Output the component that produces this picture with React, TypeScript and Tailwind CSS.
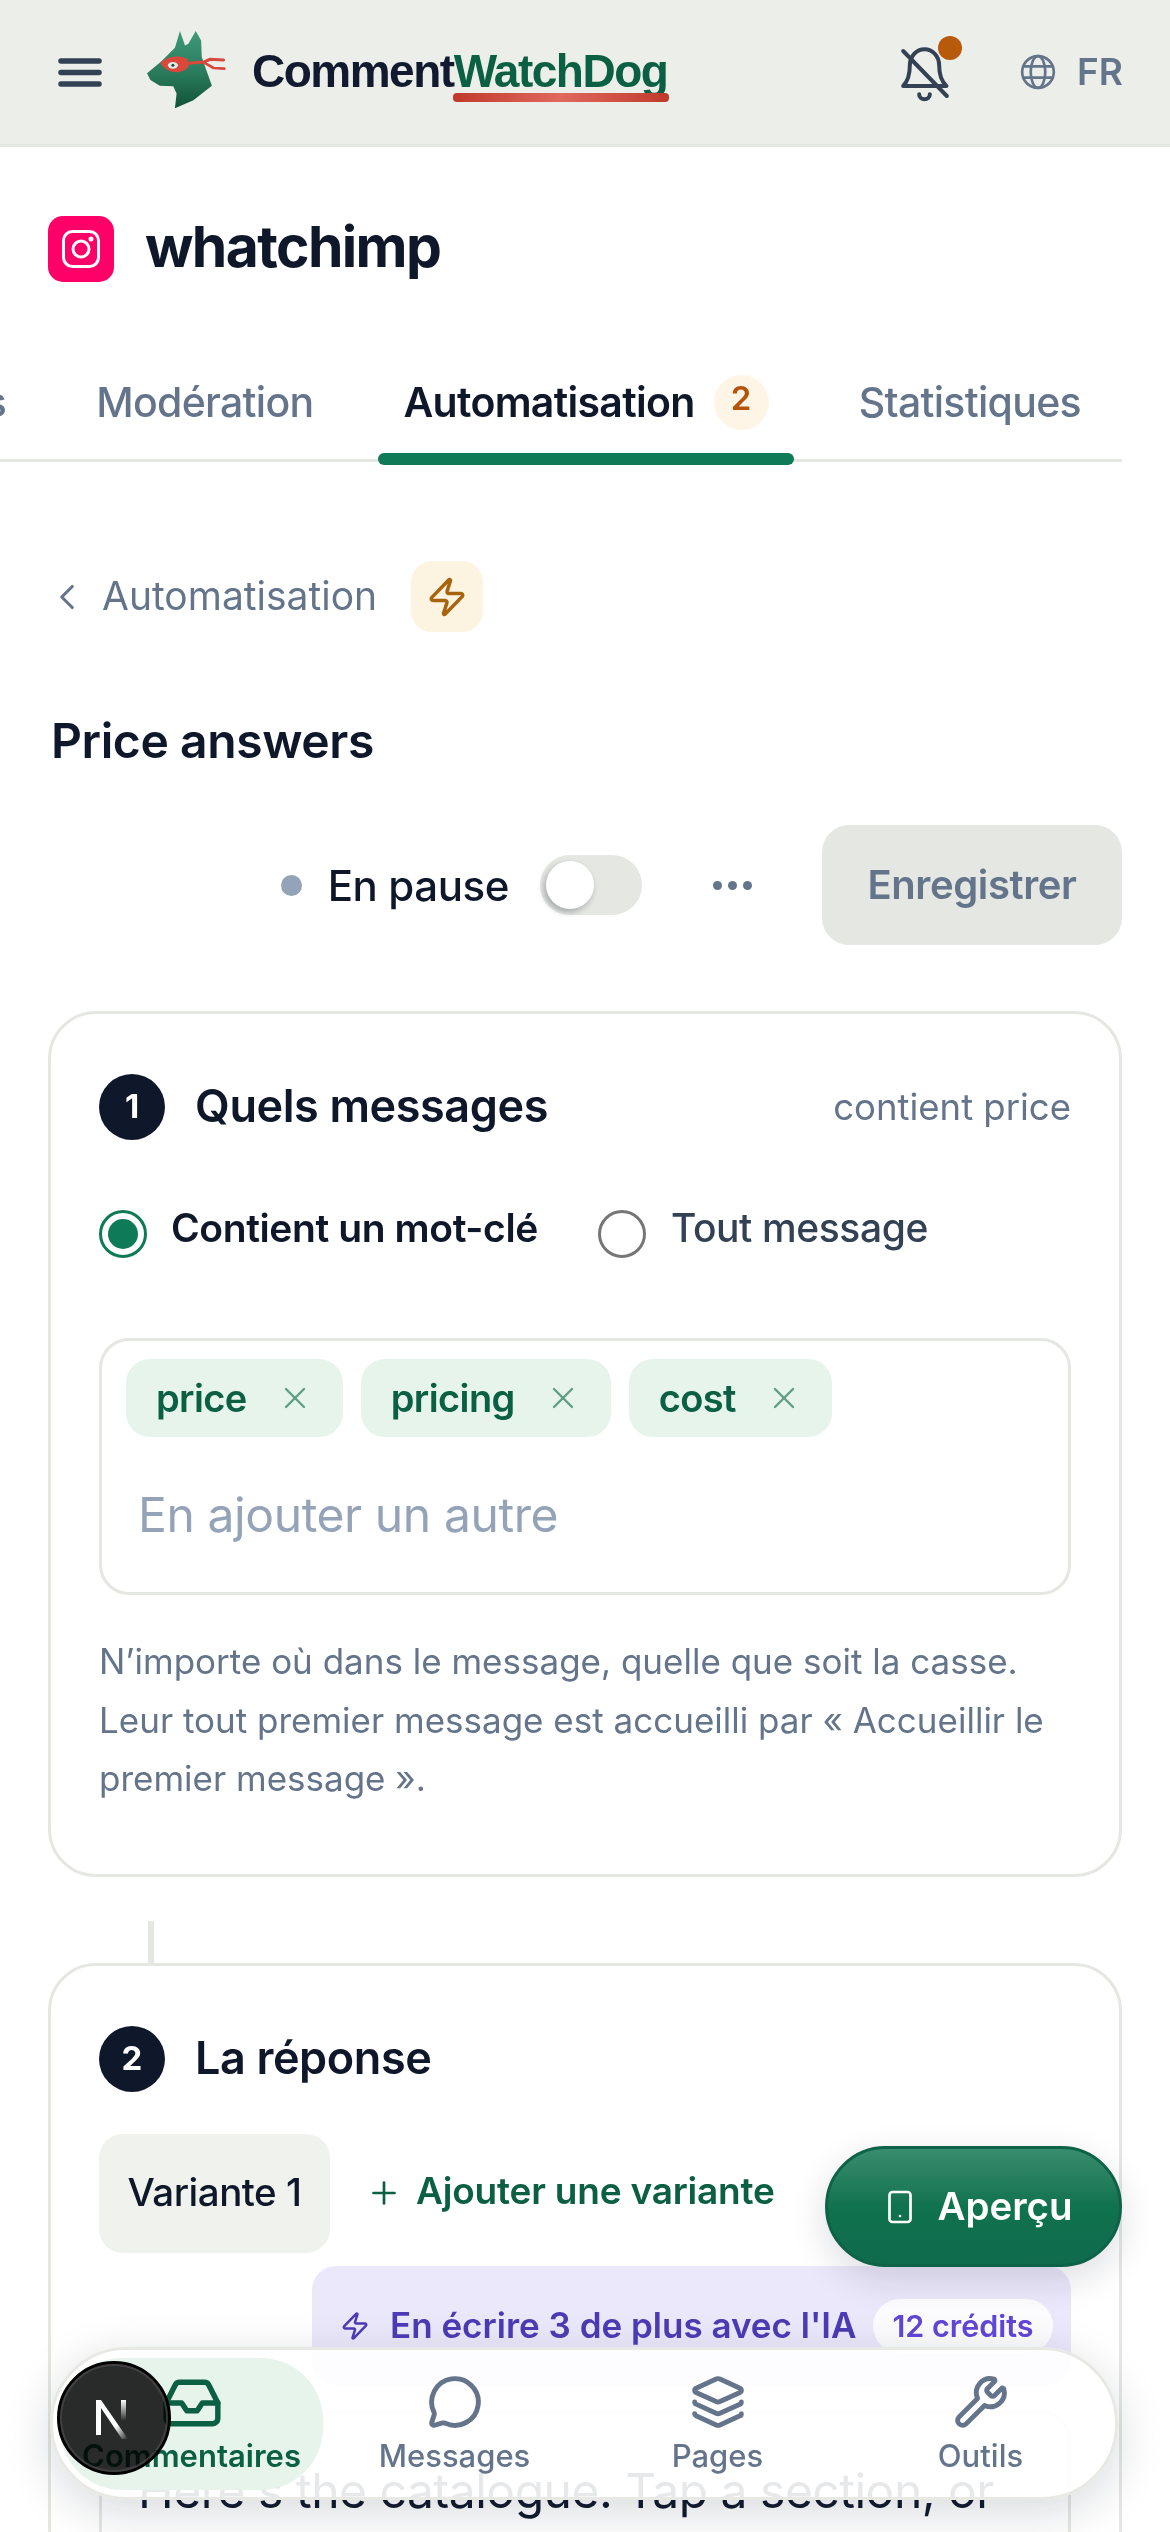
import { ChevronLeft, Inbox, Layers, MessageCircle, Plus, Smartphone, Wrench, X, Zap } from "lucide-react";

const TABS = [
  { name: "Commentaires", active: false },
  { name: "Modération", active: false },
  { name: "Automatisation", active: true },
  { name: "Statistiques", active: false },
];

const KEYWORDS = ["price", "pricing", "cost"];

const NAV = [
  { name: "Messages", icon: MessageCircle },
  { name: "Pages", icon: Layers },
  { name: "Outils", icon: Wrench },
];

function DogLogo() {
  return (
    <svg viewBox="40 30 250 250" className="w-[84px] h-[84px] shrink-0">
      <defs>
        <linearGradient id="dog" x1="0" y1="0" x2="0" y2="1">
          <stop offset="0" stopColor="#3f9a7a" />
          <stop offset="0.55" stopColor="#2a7a5c" />
          <stop offset="1" stopColor="#0f5238" />
        </linearGradient>
      </defs>
      <path
        d="M52 168 L95 132 L135 92 L150 42 L165 85 L175 80 L197 42 L213 70 L215 120 L245 205 L190 248 L135 272 L140 228 L130 206 L90 205 L62 188 Z"
        fill="url(#dog)"
      />
      <path d="M92 138 C105 118 155 110 172 126 L176 146 C160 172 112 172 92 138 Z" fill="#d9483b" />
      <path d="M170 138 L222 134 L240 126 L280 128" fill="none" stroke="#d9483b" strokeWidth="9" strokeLinecap="round" strokeLinejoin="round" />
      <path d="M222 136 L250 152 L282 154" fill="none" stroke="#d9483b" strokeWidth="8" strokeLinecap="round" strokeLinejoin="round" />
      <ellipse cx="129" cy="144" rx="15" ry="10" fill="#dfeee8" />
      <circle cx="129" cy="144" r="4.5" fill="#1f4a3b" />
    </svg>
  );
}

function BellSlash() {
  return (
    <svg viewBox="60 80 155 165" className="w-[52px] h-[55px]" fill="none" stroke="#334155" strokeWidth="12" strokeLinecap="round" strokeLinejoin="round">
      <path d="M72 197 c14-14 20-40 20-62 c0-28 20-48 44-48 s44 20 44 48 c0 22 6 48 22 62 Z" />
      <path d="M72 92 L203 227" />
      <path d="M120 222 c0 20 32 20 32 0" />
    </svg>
  );
}

function Globe() {
  return (
    <svg viewBox="0 0 24 24" className="w-[38px] h-[38px]" fill="none" stroke="#64748b" strokeWidth="1.7">
      <circle cx="12" cy="12" r="10" />
      <ellipse cx="12" cy="12" rx="4.6" ry="10" />
      <path d="M3 8.5h18M3 15.5h18" />
    </svg>
  );
}

function InstagramTile() {
  return (
    <div className="w-[66px] h-[66px] rounded-[15px] bg-[#ff0069] flex items-center justify-center shrink-0">
      <svg viewBox="0 0 38 38" className="w-[38px] h-[38px]" fill="none" stroke="#fff" strokeWidth="3">
        <rect x="1.5" y="1.5" width="35" height="35" rx="9" />
        <circle cx="19" cy="19" r="8" />
        <circle cx="29" cy="9" r="1" fill="#fff" />
      </svg>
    </div>
  );
}

function StepHeader({ n, title, hint }: { n: number; title: string; hint?: string }) {
  return (
    <div className="flex items-center h-[66px]">
      <span className="w-[66px] h-[66px] rounded-full bg-[#0f172a] text-white text-[33px] font-bold flex items-center justify-center shrink-0">
        {n}
      </span>
      <h2 className="ml-[30px] text-[45px] leading-[60px] font-semibold tracking-[-0.4px] -mt-[2px] text-[#0f172a]">{title}</h2>
      {hint && <span className="ml-auto text-[36.5px] text-[#64748b]">{hint}</span>}
    </div>
  );
}

function NextBadge() {
  return (
    <div className="absolute left-[57px] top-[2361px] w-[114px] h-[114px]">
      <div className="absolute inset-0 rounded-full bg-[#2d2d2d] border-[3px] border-black mix-blend-multiply" />
      <div className="absolute inset-[3px] rounded-full border-[2px] border-[#4a4a4a]/70" />
      <svg viewBox="0 0 40 40" className="absolute left-[37px] top-[38px] w-[40px] h-[40px]" fill="none">
        <defs>
          <linearGradient id="nx" x1="0.2" y1="0.2" x2="1" y2="1">
            <stop offset="0.55" stopColor="#fff" />
            <stop offset="1" stopColor="#fff" stopOpacity="0" />
          </linearGradient>
          <linearGradient id="ny" x1="0" y1="0" x2="0" y2="1">
            <stop offset="0" stopColor="#fff" />
            <stop offset="0.8" stopColor="#fff" stopOpacity="0" />
          </linearGradient>
        </defs>
        <path d="M2 1h5l27 39h-6L7 9v27H2z" fill="url(#nx)" />
        <rect x="27" y="1" width="5" height="26" fill="url(#ny)" />
      </svg>
    </div>
  );
}

export default function App() {
  return (
    <div className="relative w-[1170px] h-[2532px] overflow-hidden bg-white font-[Inter,sans-serif] text-[#0f172a]">
      {/* top bar */}
      <header className="h-[147px] bg-[#eceee9] border-b-[3px] border-[#e5e7e3] flex items-center pl-[58px] pr-[47px]">
        <svg viewBox="0 0 44 29" className="w-[44px] h-[29px] shrink-0" stroke="#334155" strokeWidth="5.5" strokeLinecap="round">
          <path d="M3 3h38M3 14.5h38M3 26h38" />
        </svg>
        <div className="ml-[41px] -mt-[6px]">
          <DogLogo />
        </div>
        <div className="relative ml-[25px] -mt-[3px] font-['Liberation_Sans',sans-serif] font-bold text-[46px] leading-[56px] tracking-[-1.5px] whitespace-nowrap">
          <span className="text-[#111a2e]">Comment</span>
          <span className="text-[#0b5f43]">WatchDog</span>
          <span className="absolute right-[-2px] top-[50px] w-[216px] h-[9px] rounded-[4px] bg-linear-to-r from-[#c0392b] via-[#e0685c] to-[#c0392b]" />
        </div>
        <div className="relative ml-auto mt-[4px]">
          <BellSlash />
          <span className="absolute left-[39px] -top-[11px] w-[24px] h-[24px] rounded-full bg-[#b85a0c]" />
        </div>
        <div className="ml-[68px] flex items-center gap-[20px]">
          <Globe />
          <span className="text-[37px] font-semibold text-[#64748b]">FR</span>
        </div>
      </header>

      {/* account */}
      <div className="mt-[69px] pl-[48px] flex items-center h-[66px] gap-[31px]">
        <InstagramTile />
        <h1 className="text-[57px] leading-[66px] font-bold tracking-[-1.6px] -mt-[4px]">whatchimp</h1>
      </div>

      {/* section tabs, scrolled sideways so the first one is cut off */}
      <div className="mt-[62px] w-[1122px] h-[118px] border-b-[3px] border-[#e5e7e3] flex justify-end gap-[40px] pr-[16px]">
        {TABS.map((tab) => (
          <div key={tab.name} className="relative shrink-0 flex items-center gap-[19px] px-[25px] pt-[3px]">
            <span className={`text-[41px] tracking-[-0.7px] whitespace-nowrap ${tab.active ? "font-semibold text-[#0f172a]" : "font-medium text-[#64748b]"}`}>
              {tab.name}
            </span>
            {tab.active && (
              <>
                <span className="w-[55px] h-[55px] rounded-full bg-[#fef5e6] text-[#b45309] text-[33px] font-semibold flex items-center justify-center -mt-[2px] pb-[6px]">
                  2
                </span>
                <span className="absolute left-0 right-0 bottom-[-6px] h-[12px] rounded-[6px] bg-[#0f7a57]" />
              </>
            )}
          </div>
        ))}
      </div>

      <main className="px-[48px]">
        {/* breadcrumb */}
        <div className="mt-[99px] flex items-center h-[71px]">
          <ChevronLeft size={42} strokeWidth={1.8} className="text-[#64748b] -ml-[2px]" />
          <span className="ml-[14px] text-[39px] text-[#64748b]">Automatisation</span>
          <span className="ml-[34px] w-[72px] h-[71px] rounded-[21px] bg-[#fdf3e1] flex items-center justify-center">
            <Zap size={42} strokeWidth={2} className="text-[#a8640c]" />
          </span>
        </div>

        <h2 className="mt-[80px] ml-[3px] text-[48px] leading-[58px] font-semibold tracking-[-0.4px]">Price answers</h2>

        {/* status row */}
        <div className="mt-[55px] h-[120px] flex items-center justify-end">
          <span className="w-[21px] h-[21px] rounded-full bg-[#94a3b8]" />
          <span className="ml-[26px] text-[42px] font-medium tracking-[-0.4px]">En pause</span>
          <span className="ml-[31px] w-[102px] h-[60px] rounded-full bg-[#e5e7e2] flex items-center pl-[6px]">
            <span className="w-[48px] h-[48px] rounded-full bg-white shadow-[-2px_3px_6px_rgba(15,23,42,0.3)]" />
          </span>
          <span className="ml-[71px] flex gap-[6px]">
            <span className="w-[9px] h-[9px] rounded-full bg-[#64748b]" />
            <span className="w-[9px] h-[9px] rounded-full bg-[#64748b]" />
            <span className="w-[9px] h-[9px] rounded-full bg-[#64748b]" />
          </span>
          <button className="ml-[70px] w-[300px] h-[120px] rounded-[27px] bg-[#e5e7e2] text-[40px] tracking-[-0.4px] font-semibold text-[#64748b]">
            Enregistrer
          </button>
        </div>

        {/* step 1 */}
        <section className="mt-[66px] border-[3px] border-[#e5e7e3] rounded-[48px] px-[48px] pt-[60px] pb-[66px]">
          <StepHeader n={1} title="Quels messages" hint="contient price" />

          <div className="mt-[59px] flex items-start">
            <span className="mt-[11px] w-[48px] h-[48px] rounded-full border-[3px] border-[#0f7a57] flex items-center justify-center shrink-0">
              <span className="w-[30px] h-[30px] rounded-full bg-[#0f7a57]" />
            </span>
            <span className="ml-[24px] text-[39px] leading-[58px] font-semibold tracking-[-0.4px] whitespace-nowrap">Contient un mot-clé</span>
            <span className="ml-[60px] mt-[11px] w-[48px] h-[48px] rounded-full border-[3px] border-[#767676] shrink-0" />
            <span className="ml-[25px] text-[39px] leading-[58px] font-medium tracking-[-0.4px] text-[#334155] whitespace-nowrap">Tout message</span>
          </div>

          <div className="mt-[80px] h-[257px] border-[3px] border-[#e5e7e3] rounded-[30px] pt-[18px] pl-[24px]">
            <div className="flex gap-[18px]">
              {KEYWORDS.map((word) => (
                <span key={word} className="h-[78px] rounded-[24px] bg-[#e6f4ec] pl-[30px] pr-[30px] flex items-center gap-[30px]">
                  <span className="text-[38px] tracking-[-0.6px] font-semibold text-[#0b5f43]">{word}</span>
                  <X size={36} strokeWidth={1.6} className="text-[#5f9e84]" />
                </span>
              ))}
            </div>
            <div className="mt-[48px] ml-[12px] text-[48px] leading-[60px] tracking-[-0.4px] text-[#94a3b8]">En ajouter un autre</div>
          </div>

          <p className="mt-[37px] text-[35px] leading-[58.5px] text-[#64748b]">
            N’importe où dans le message, quelle que soit la casse.
            <br />
            Leur tout premier message est accueilli par « Accueillir le
            <br />
            premier message ».
          </p>
        </section>

        {/* step 2 */}
        <section className="relative mt-[86px] border-[3px] border-[#e5e7e3] rounded-[48px] px-[48px] pt-[60px] pb-[60px]">
          <span className="absolute left-[97px] top-[-45px] w-[6px] h-[45px] bg-[#e5e7e3]" />
          <StepHeader n={2} title="La réponse" />

          <div className="mt-[42px] flex items-center">
            <span className="w-[231px] h-[119px] rounded-[24px] bg-[#eff2ed] text-[38.5px] tracking-[-0.5px] font-medium flex items-center justify-center">
              Variante 1
            </span>
            <Plus size={36} strokeWidth={1.8} className="ml-[36px] text-[#0b5f43]" />
            <span className="ml-[14px] text-[37px] tracking-[-0.2px] font-semibold text-[#0b5f43] -mt-[5px]">Ajouter une variante</span>
          </div>

          <div className="mt-[13px] ml-auto w-[759px] h-[120px] rounded-[24px] bg-[#ece8fb] flex items-center pl-[28px] pr-[18px]">
            <Zap size={30} strokeWidth={2} className="text-[#4c3bb5]" />
            <span className="ml-[20px] text-[35px] font-semibold text-[#4c3bb5] whitespace-nowrap">En écrire 3 de plus avec l'IA</span>
            <span className="ml-auto h-[54px] w-[180px] rounded-full bg-white/85 text-[30.5px] font-semibold text-[#6246d8] flex items-center justify-center whitespace-nowrap">
              12 crédits
            </span>
          </div>

          <div className="mt-[24px] h-[300px] border-[3px] border-[#e5e7e3] rounded-[30px] pt-[42px] pl-[36px] text-[48px] leading-[72px] tracking-[-0.5px] text-[#111a2e] whitespace-nowrap">
            Here's the catalogue. Tap a section, or
          </div>
        </section>
      </main>

      {/* floating preview button */}
      <button className="absolute right-[48px] top-[2146px] w-[297px] h-[121px] rounded-full border-[3px] border-[#0d6247] bg-linear-to-b from-[#378d6f] via-[#10724f] to-[#0f6b4c] text-white text-[38.5px] font-semibold flex items-center justify-center gap-[19px] pl-[8px] shadow-[0_12px_36px_rgba(15,23,42,0.14)]">
        <Smartphone size={36} strokeWidth={1.8} />
        Aperçu
      </button>

      {/* bottom nav */}
      <nav className="absolute left-[50px] top-[2347px] w-[1068px] h-[153px] rounded-[76px] border-[3px] border-[#e8e9e5] bg-white/90 shadow-[0_12px_48px_rgba(15,23,42,0.16)] grid grid-cols-4 p-[8px_3px_7px_7px]">
        <div className="h-[132px] rounded-[62px] bg-[#e6f4ec] flex flex-col items-center pt-[14px] text-[#0b5f43]">
          <Inbox size={62} strokeWidth={2.1} />
          <span className="text-[31px] leading-[44px] font-semibold">Commentaires</span>
        </div>
        {NAV.map((item) => (
          <div key={item.name} className="h-[132px] flex flex-col items-center pt-[16px] text-[#64748b]">
            <item.icon size={56} strokeWidth={2.1} className="mb-[4px]" />
            <span className="text-[31px] leading-[44px] font-medium">{item.name}</span>
          </div>
        ))}
      </nav>

      <NextBadge />
    </div>
  );
}
